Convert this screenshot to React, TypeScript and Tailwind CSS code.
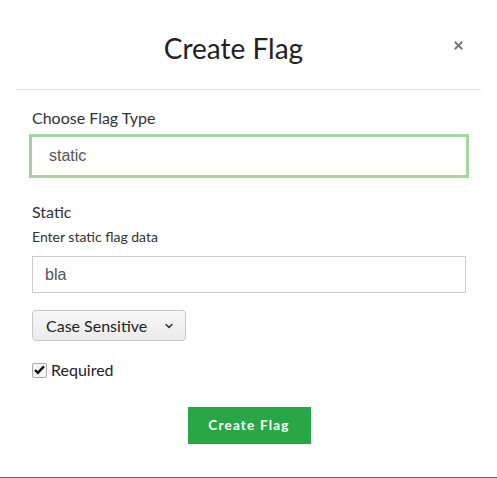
import { ChevronDown, X } from 'lucide-react';

export default function App() {
  return (
    <div className="w-[497px] h-[478px] bg-white border-b border-[#666] overflow-hidden font-['Lato',sans-serif] text-[#333]">
      <div className="h-[90px] mx-4 border-b border-[#e5e5e5] flex items-center">
        <h1 className="flex-1 text-center text-[28px] text-[#222] pt-[6px]">Create Flag</h1>
        <div className="w-[30px] flex justify-start pl-[1px] pt-[1px]">
          <X className="w-[13px] h-[13px] text-[#777]" strokeWidth={3.5} />
        </div>
      </div>

      <div className="px-8 pt-[18px] flex flex-col">
        <label className="text-[16px] leading-[20px]">Choose Flag Type</label>
        <div className="mt-[6px] -ml-[3px] w-[440px] h-[44px] border-[3px] border-[#a4d6a0] flex items-center pl-[17px] font-['Liberation_Sans',sans-serif] text-[16px] text-[#555]">
          static
        </div>

        <label className="mt-[24px] text-[16px] leading-[20px]">Static</label>
        <p className="mt-[6px] text-[14px] leading-[18px] text-[#333]">Enter static flag data</p>
        <div className="mt-[10px] w-[434px] h-[37px] border border-[#ccc] flex items-center pl-[12px] font-['Liberation_Sans',sans-serif] text-[16px] text-[#555]">
          bla
        </div>

        <div className="mt-[17px] w-[154px] h-[31px] rounded-[4px] border border-[#c8c8c8] bg-gradient-to-b from-[#f7f7f7] to-[#ebebeb] flex items-center justify-between pl-[13px] pr-[10px] text-[16px] text-[#222]">
          <span>Case Sensitive</span>
          <ChevronDown className="w-[12px] h-[12px] text-[#333]" strokeWidth={3} />
        </div>

        <div className="mt-[19px] flex items-center gap-[4px] h-[20px]">
          <span className="w-[15px] h-[15px] rounded-[2px] border border-[#aaa] bg-[#f4f4f4] flex items-center justify-center">
            <svg viewBox="0 0 16 16" className="w-[14px] h-[14px]">
              <path d="M2.5 8 L6 11.5 L13.5 3.5" fill="none" stroke="#111" strokeWidth="3" />
            </svg>
          </span>
          <span className="text-[16px] text-[#222]">Required</span>
        </div>

        <div className="mt-[27px] flex justify-center pl-[1px]">
          <button className="w-[123px] h-[37px] bg-[#28a745] text-white text-[13.5px] font-bold tracking-[0.09em]">
            Create Flag
          </button>
        </div>
      </div>
    </div>
  );
}
